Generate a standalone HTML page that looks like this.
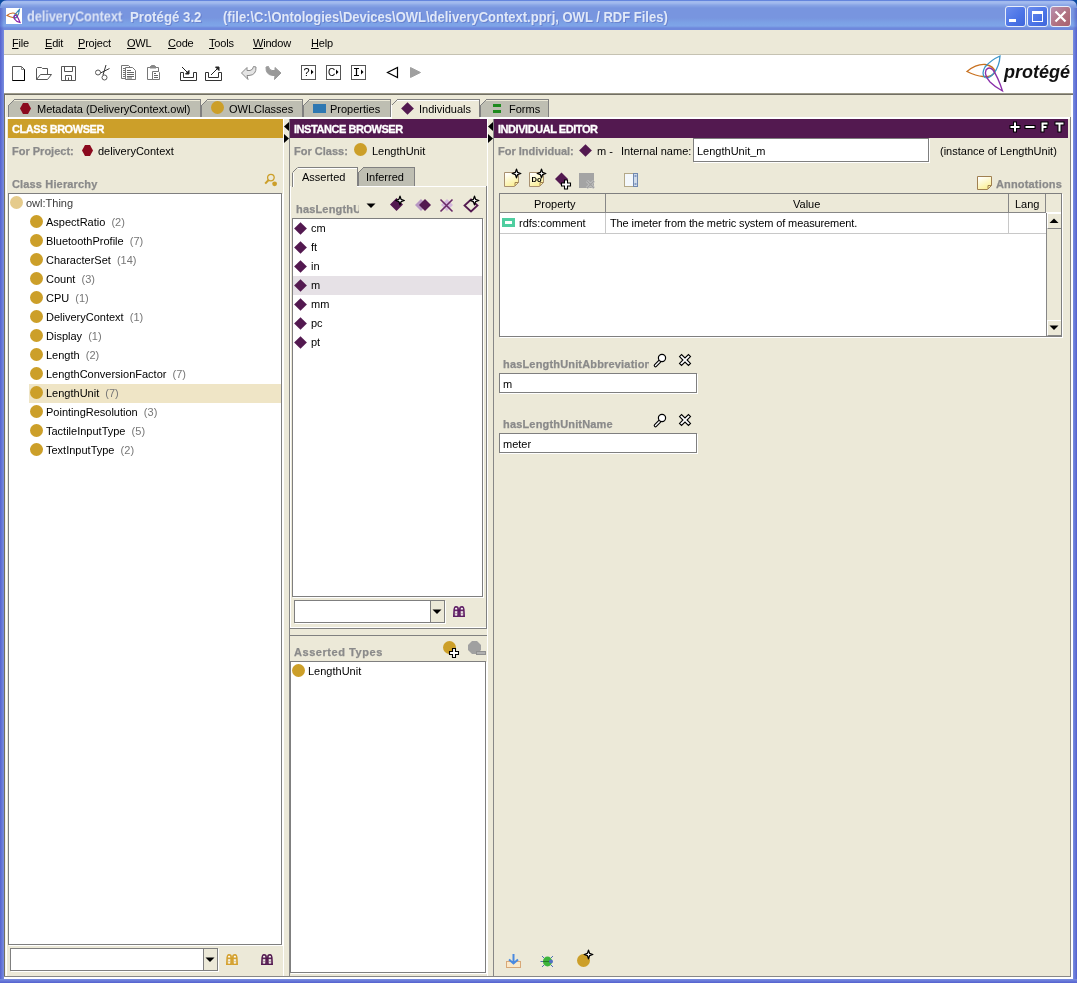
<!DOCTYPE html>
<html><head><meta charset="utf-8">
<style>
*{margin:0;padding:0;box-sizing:border-box}
html,body{width:1077px;height:983px;overflow:hidden;background:#ECE9D8;font-family:"Liberation Sans",sans-serif;font-size:11px;color:#000}
.a{position:absolute}
.t{position:absolute;white-space:nowrap;line-height:13px;will-change:transform}
.b{font-weight:bold}
.g{color:#8A8A8A;-webkit-text-stroke:0.25px #8A8A8A}
.c{color:#777}
.hdr{position:absolute;color:#fff;font-weight:bold;font-size:11px;line-height:21px;padding-left:4px;height:19px;letter-spacing:-0.45px;will-change:transform;-webkit-text-stroke:0.3px #fff}
.box{position:absolute;background:#fff;border:1px solid #7F7F7F;box-shadow:1px 1px 0 #fff}
.cg{position:absolute;width:13px;height:13px;border-radius:50%;background:#CC9F29}
.dm{position:absolute;width:9px;height:9px;background:#531950;transform:rotate(45deg)}
.u{text-decoration:underline}
.hl{position:absolute;background:#7F7F7F}
.wl{position:absolute;background:#fff}
svg{position:absolute;overflow:visible;will-change:transform}
</style></head><body>
<!-- window frame -->
<div class="a" style="left:0;top:0;width:1077px;height:983px;background:#6F84DC"></div>
<div class="a" style="left:0;top:0;width:8px;height:8px;background:#0B4AA0"></div><div class="a" style="left:1069px;top:0;width:8px;height:8px;background:#0B4AA0"></div>
<div class="a" style="left:0;top:0;width:1077px;height:30px;background:linear-gradient(#6485DD 0px,#6485DD 1px,#A2BAEE 1px,#A2BAEE 3px,#8AA6E6 5px,#7895DF 8px,#7895DF 18px,#7CA2E6 23px,#7EA4E8 26px,#6E88DC 28px,#6E88DC 30px);border-radius:7px 7px 0 0"></div>
<div class="a" style="left:0;top:8px;width:4px;height:22px;background:linear-gradient(90deg,rgba(60,70,190,0.5),rgba(0,0,0,0))"></div><div class="a" style="left:1073px;top:8px;width:4px;height:22px;background:linear-gradient(90deg,rgba(0,0,0,0),rgba(60,70,190,0.5))"></div>
<div class="a" style="left:0;top:30px;width:4px;height:953px;background:linear-gradient(90deg,#5461CF,#7A8FE0)"></div>
<div class="a" style="left:1073px;top:30px;width:4px;height:953px;background:linear-gradient(90deg,#7A8FE0,#5461CF)"></div>
<div class="a" style="left:0;top:979px;width:1077px;height:4px;background:linear-gradient(#7A8FE0,#5461CF)"></div>
<div class="a" style="left:4px;top:30px;width:1069px;height:949px;background:#ECE9D8"></div>

<!-- title -->
<div class="a" style="left:6px;top:8px;width:16px;height:16px;background:#fff"></div>
<svg style="left:6px;top:8px" width="16" height="16" viewBox="0 0 16 16">
<path d="M1 7.5 Q5 4 9.5 5.5 Q12 7 11.5 8.5 Q10 10.5 7 9.5 Q4 9 1 7.5Z" fill="none" stroke="#C8671E" stroke-width="1.1"/>
<path d="M13.5 1.5 Q13 6 11 9 Q9.5 10.5 8.5 9.5 Q7.5 8 9.5 6 Q11 4 13.5 1.5Z" fill="none" stroke="#3A88B8" stroke-width="1.1"/>
<path d="M14 14.5 Q10 13.5 8.5 11 Q7 8.5 9 7.5 Q11 7 11.8 9.5 Q13 12 14 14.5Z" fill="none" stroke="#8A20A8" stroke-width="1.2"/>
</svg>
<div class="t b" style="left:27px;top:10px;font-size:13px;line-height:16px;color:#E0E8F8;text-shadow:1px 1px 0 #6A84D0;transform:scale(0.975,1.1);transform-origin:0 100%">deliveryContext</div>
<div class="t b" style="left:130px;top:10px;font-size:13px;line-height:16px;color:#E0E8F8;text-shadow:1px 1px 0 #6A84D0;transform:scale(1.02,1.1);transform-origin:0 100%">Protégé 3.2</div>
<div class="t b" style="left:223px;top:10px;font-size:13px;line-height:16px;color:#E0E8F8;text-shadow:1px 1px 0 #6A84D0;transform:scale(1.0,1.1);transform-origin:0 100%">(file:\C:\Ontologies\Devices\OWL\deliveryContext.pprj, OWL / RDF Files)</div>
<!-- title buttons -->
<div class="a" style="left:1005px;top:6px;width:21px;height:21px;border:1px solid #E8EEFA;border-radius:3px;background:linear-gradient(135deg,#6A8CEE,#4A73E6 60%,#3F66DA)"></div>
<div class="a" style="left:1009px;top:19px;width:7px;height:3px;background:#fff"></div>
<div class="a" style="left:1027px;top:6px;width:21px;height:21px;border:1px solid #E8EEFA;border-radius:3px;background:linear-gradient(135deg,#6A8CEE,#4A73E6 60%,#3F66DA)"></div>
<div class="a" style="left:1032px;top:11px;width:11px;height:11px;border:1px solid #fff;border-top-width:3px;border-left-width:1.5px;border-right-width:1.5px"></div>
<div class="a" style="left:1050px;top:6px;width:21px;height:21px;border:1px solid #E8EEFA;border-radius:3px;background:linear-gradient(135deg,#B890B0,#B0707E 60%,#A86070)"></div>
<svg style="left:1050px;top:6px" width="21" height="21"><path d="M5.5 5.5 L15.5 15.5 M15.5 5.5 L5.5 15.5" stroke="#fff" stroke-width="2.2"/></svg>

<!-- menubar -->
<div class="a" style="left:4px;top:54px;width:1069px;height:1px;background:#C5C2B2"></div>
<div class="t" style="left:12px;top:37px;letter-spacing:-0.2px"><span class="u">F</span>ile</div>
<div class="t" style="left:45px;top:37px;letter-spacing:-0.2px"><span class="u">E</span>dit</div>
<div class="t" style="left:78px;top:37px;letter-spacing:-0.2px"><span class="u">P</span>roject</div>
<div class="t" style="left:127px;top:37px;letter-spacing:-0.2px"><span class="u">O</span>WL</div>
<div class="t" style="left:168px;top:37px;letter-spacing:-0.2px"><span class="u">C</span>ode</div>
<div class="t" style="left:209px;top:37px;letter-spacing:-0.2px"><span class="u">T</span>ools</div>
<div class="t" style="left:253px;top:37px;letter-spacing:-0.2px"><span class="u">W</span>indow</div>
<div class="t" style="left:311px;top:37px;letter-spacing:-0.2px"><span class="u">H</span>elp</div>

<!-- toolbar -->
<div class="a" style="left:4px;top:55px;width:1069px;height:38px;background:#fff"></div>
<svg style="left:0;top:0" width="1077" height="95">
<g fill="none" stroke="#555" stroke-width="1">
<!-- new doc -->
<path d="M12.5 66.5 H21.5 L24.5 69.5 V80.5 H12.5 Z" fill="#fff"/>
<path d="M21.5 66.5 V69.5 H24.5" stroke="#888"/>
<path d="M24.5 69.5 V80.5 H12.5" stroke="#000"/>
<!-- folder -->
<path d="M36.5 79.5 V68.5 L37.5 67.5 H41.5 L42.5 68.5 H47.5 V74.5" stroke="#555"/>
<path d="M36.5 79.5 L40.5 74.5 H51.5 L47.5 79.5 Z" stroke="#555"/>
<!-- floppy -->
<path d="M61.5 66.5 H75.5 V80.5 H61.5 Z"/>
<path d="M64.5 66.5 V71.5 H72.5 V66.5"/>
<path d="M65.5 80.5 V75.5 H71.5 V80.5 M68.5 77.5 V80.5"/>
<!-- scissors -->
<circle cx="98" cy="72.5" r="2.5"/>
<circle cx="104.5" cy="77.5" r="2.5"/>
<path d="M100.5 73 L109.5 68.5 M103 75 L106 65" stroke="#333"/>
<!-- copy -->
<path d="M121.5 65.5 H128.5 L130.5 67.5 V78.5 H121.5 Z" fill="#fff" stroke="#777"/>
<path d="M123 68.5 H125 M123 70.5 H125 M123 72.5 H125 M123 74.5 H125 M123 76.5 H125" stroke="#777"/>
<path d="M125.5 67.5 H132.5 L135.5 70.5 V79.5 H125.5 Z" fill="#fff" stroke="#777"/>
<path d="M127 70.5 H131 M127 72.5 H134 M127 74.5 H134 M127 76.5 H134 M127 78 H132" stroke="#666"/>
<!-- paste -->
<path d="M147.5 67.5 H158.5 V79.5 H147.5 Z" fill="#fff" stroke="#777"/>
<path d="M150 67 L151.5 65.5 H154.5 L156 67 V68 H150 Z" fill="#888" stroke="#888"/>
<path d="M152.5 71.5 H158.5 L159.5 72.5 V79.5 H152.5 Z" fill="#fff" stroke="#777"/>
<path d="M154 73.5 H156 M154 75.5 H158 M154 77.5 H158" stroke="#666"/>
<!-- import -->
<path d="M180.5 72.5 H183.5 V77.5 H193.5 V72.5 H196.5 V80.5 H180.5 Z" stroke="#333"/>
<path d="M182 67 L188.5 73.5" stroke="#222"/>
<path d="M189 74 L189 70.5 L185.5 74 Z" fill="#222" stroke="#222"/>
<!-- export -->
<path d="M205.5 72.5 H208.5 V77.5 H218.5 V72.5 H221.5 V80.5 H205.5 Z" stroke="#333"/>
<path d="M211 75 L218 68" stroke="#222"/>
<path d="M219 67 L219 70.5 L215.5 67 Z" fill="#222" stroke="#222"/>
<!-- undo -->
<path d="M241.5 73 L247 67.5 V70.5 H250 Q253 70 253.5 66.5 L256 67 Q256.5 75 249 75.5 H247 L248 79.5 Z" fill="#E4E4E4" stroke="#888"/>
<!-- redo -->
<path d="M281 73 L275 67.5 V70.5 H272 Q269 70 268.5 66.5 L266 67 Q265.5 75 273 75.5 H275 L274.5 79.5 Z" fill="#9A9A9A" stroke="#9A9A9A"/>
<!-- boxes -->
<rect x="301.5" y="65.5" width="14" height="14" stroke="#555"/>
<rect x="326.5" y="65.5" width="14" height="14" stroke="#555"/>
<rect x="351.5" y="65.5" width="14" height="14" stroke="#555"/>
<!-- nav -->
<path d="M397.5 67.5 V77.5 L387.5 72.5 Z" stroke="#000" stroke-width="1.2"/>
<path d="M410.5 67.5 V77.5 L420.5 72.5 Z" fill="#A0A0A0" stroke="#A0A0A0"/>
</g>
<g fill="#000">
<polygon points="311,69.5 313.5,72 311,74.5"/>
<polygon points="336,69.5 338.5,72 336,74.5"/>
<polygon points="361,69.5 363.5,72 361,74.5"/>
</g>
<text x="303.5" y="76" font-family="Liberation Sans" font-size="11" fill="#000">?</text>
<text x="328" y="76" font-family="Liberation Sans" font-size="10" fill="#000">C</text>
<path d="M354 68.5 H359 M356.5 68.5 V75.5 M354 75.5 H359" stroke="#000" stroke-width="1.2" fill="none"/>
<!-- protege logo -->
<g fill="none" stroke-width="1.3">
<path d="M967 71.5 Q976 64 985 64.5 Q994 66 995 72 Q993 77 983 76.5 Q976 76 967 71.5 Z" stroke="#C8701E"/>
<path d="M1000 56 Q999.5 66 994 73 Q989 79 985 77.5 Q981 74 985 67 Q991 60 1000 56 Z" stroke="#3A94C8"/>
<path d="M1002.5 91 Q995 87 990 82 Q984 75 986 70 Q989 66 993 70 Q998 77 1002.5 91 Z" stroke="#8A2FAA"/>
</g>
<text x="1004" y="77.6" font-family="Liberation Sans" font-size="18" font-weight="bold" font-style="italic" fill="#111">protégé</text>
</svg>


<!-- tabbed pane border -->
<div class="a" style="left:4px;top:93px;width:1069px;height:1px;background:#9D9A8A"></div>
<div class="a" style="left:4px;top:94px;width:1069px;height:1px;background:#716F64"></div>
<div class="a" style="left:4px;top:94px;width:1px;height:883px;background:#716F64"></div>
<div class="a" style="left:5px;top:95px;width:1px;height:881px;background:#F6F4EA"></div>
<div class="a" style="left:1070px;top:117px;width:1px;height:860px;background:#878787"></div>
<div class="a" style="left:1071px;top:95px;width:2px;height:884px;background:#fff"></div>
<div class="a" style="left:4px;top:976px;width:1067px;height:1px;background:#878787"></div>
<div class="a" style="left:4px;top:977px;width:1069px;height:2px;background:#fff"></div>
<svg style="left:0;top:0" width="1077" height="140" shape-rendering="crispEdges">
<g fill="#BEBEB2" stroke="none">
<polygon points="8,105 14,99 201,99 201,117 8,117"/>
<polygon points="201,105 207,99 303,99 303,117 201,117"/>
<polygon points="303,105 309,99 391,99 391,117 303,117"/>
<polygon points="480,105 486,99 549,99 549,117 480,117"/>
</g>
<polygon points="391,105 397,99 480,99 480,119 391,119" fill="#ECE9D8"/>
<g fill="#ECE9D8"><rect x="13" y="100" width="187" height="1"/><rect x="206" y="100" width="96" height="1"/><rect x="308" y="100" width="82" height="1"/><rect x="485" y="100" width="63" height="1"/></g>
<g fill="#808080">
<rect x="14" y="99" width="187" height="1"/><rect x="8" y="105" width="1" height="12"/><rect x="200" y="99" width="1" height="18"/>
<rect x="207" y="99" width="96" height="1"/><rect x="201" y="105" width="1" height="12"/><rect x="302" y="99" width="1" height="18"/>
<rect x="309" y="99" width="82" height="1"/><rect x="303" y="105" width="1" height="12"/><rect x="390" y="99" width="1" height="18"/>
<rect x="397" y="99" width="83" height="1"/><rect x="479" y="99" width="1" height="18"/>
<rect x="486" y="99" width="63" height="1"/><rect x="480" y="105" width="1" height="12"/><rect x="548" y="99" width="1" height="18"/>
</g>
<g stroke="#808080" stroke-width="1" shape-rendering="auto">
<path d="M8.5 105.5 L14.5 99.5 M201.5 105.5 L207.5 99.5 M303.5 105.5 L309.5 99.5 M391.5 105.5 L397.5 99.5 M480.5 105.5 L486.5 99.5"/>
</g>
<rect x="397" y="100" width="82" height="1" fill="#fff"/>
<rect x="391" y="105" width="1" height="14" fill="#fff"/>
<rect x="6" y="117" width="385" height="2" fill="#fff"/>
<rect x="480" y="117" width="590" height="2" fill="#fff"/>
<rect x="6" y="117" width="1" height="859" fill="#fff"/>
</svg>
<svg style="left:20px;top:103px" width="11" height="11" viewBox="0 0 11 11"><polygon points="3,0 8,0 11,5.5 8,11 3,11 0,5.5" fill="#8B0A1E"/></svg>
<div class="t" style="left:37px;top:103px">Metadata (DeliveryContext.owl)</div>
<div class="cg" style="left:211px;top:101px"></div>
<div class="t" style="left:229px;top:103px">OWLClasses</div>
<div class="a" style="left:313px;top:104px;width:13px;height:9px;background:#2E78B2"></div>
<div class="t" style="left:330px;top:103px">Properties</div>
<div class="dm" style="left:403px;top:104px"></div>
<div class="t" style="left:418.5px;top:103px">Individuals</div>
<div class="a" style="left:493px;top:104px;width:8px;height:3px;background:#1E8A1E"></div>
<div class="a" style="left:493px;top:110px;width:8px;height:3px;background:#1E8A1E"></div>
<div class="t" style="left:509px;top:103px">Forms</div>


<!-- splitter 1 -->
<div class="a" style="left:283px;top:119px;width:1px;height:857px;background:#fff"></div>
<div class="a" style="left:289px;top:119px;width:1px;height:857px;background:#878787"></div>
<svg style="left:284px;top:122px" width="6" height="22"><polygon points="5,0 5,9 0,4.5" fill="#000"/><polygon points="0,12 0,21 5,16.5" fill="#000"/></svg>
<!-- splitter 2 -->
<div class="a" style="left:487px;top:119px;width:1px;height:857px;background:#fff"></div>
<div class="a" style="left:493px;top:119px;width:1px;height:857px;background:#878787"></div>
<svg style="left:488px;top:122px" width="6" height="22"><polygon points="5,0 5,9 0,4.5" fill="#000"/><polygon points="0,12 0,21 5,16.5" fill="#000"/></svg>

<!-- CLASS BROWSER -->
<div class="hdr" style="left:8px;top:119px;width:275px;background:#CC9F29">CLASS BROWSER</div>
<div class="t b g" style="left:12px;top:145px">For Project:</div>
<svg style="left:82px;top:145px" width="11" height="11" viewBox="0 0 11 11"><polygon points="3,0 8,0 11,5.5 8,11 3,11 0,5.5" fill="#8B0A1E"/></svg>
<div class="t" style="left:98px;top:145px">deliveryContext</div>
<div class="t b g" style="left:12px;top:178px;letter-spacing:0.15px">Class Hierarchy</div>
<svg style="left:264px;top:174px" width="14" height="13"><circle cx="6.9" cy="3.6" r="3.3" fill="none" stroke="#CC9F29" stroke-width="1.3"/><path d="M4.6 6 L1.2 9.6" stroke="#CC9F29" stroke-width="2"/><circle cx="10.6" cy="9.8" r="2.4" fill="#CC9F29"/></svg>
<div class="box" style="left:8px;top:193px;width:274px;height:752px"></div>
<div class="a" style="left:29px;top:384px;width:252px;height:19px;background:#EFE5C6"></div>
<div class="cg" style="left:10px;top:196px;background:#E5CB8C"></div>
<div class="t c" style="left:26px;top:197px;color:#3A3A3A">owl:Thing</div>
<div class="cg" style="left:30px;top:215px"></div><div class="t" style="left:46px;top:216px">AspectRatio <span class="c">&nbsp;(2)</span></div>
<div class="cg" style="left:30px;top:234px"></div><div class="t" style="left:46px;top:235px">BluetoothProfile <span class="c">&nbsp;(7)</span></div>
<div class="cg" style="left:30px;top:253px"></div><div class="t" style="left:46px;top:254px">CharacterSet <span class="c">&nbsp;(14)</span></div>
<div class="cg" style="left:30px;top:272px"></div><div class="t" style="left:46px;top:273px">Count <span class="c">&nbsp;(3)</span></div>
<div class="cg" style="left:30px;top:291px"></div><div class="t" style="left:46px;top:292px">CPU <span class="c">&nbsp;(1)</span></div>
<div class="cg" style="left:30px;top:310px"></div><div class="t" style="left:46px;top:311px">DeliveryContext <span class="c">&nbsp;(1)</span></div>
<div class="cg" style="left:30px;top:329px"></div><div class="t" style="left:46px;top:330px">Display <span class="c">&nbsp;(1)</span></div>
<div class="cg" style="left:30px;top:348px"></div><div class="t" style="left:46px;top:349px">Length <span class="c">&nbsp;(2)</span></div>
<div class="cg" style="left:30px;top:367px"></div><div class="t" style="left:46px;top:368px">LengthConversionFactor <span class="c">&nbsp;(7)</span></div>
<div class="cg" style="left:30px;top:386px"></div><div class="t" style="left:46px;top:387px">LengthUnit <span class="c">&nbsp;(7)</span></div>
<div class="cg" style="left:30px;top:405px"></div><div class="t" style="left:46px;top:406px">PointingResolution <span class="c">&nbsp;(3)</span></div>
<div class="cg" style="left:30px;top:424px"></div><div class="t" style="left:46px;top:425px">TactileInputType <span class="c">&nbsp;(5)</span></div>
<div class="cg" style="left:30px;top:443px"></div><div class="t" style="left:46px;top:444px">TextInputType <span class="c">&nbsp;(2)</span></div>
<!-- class combo -->
<div class="box" style="left:10px;top:948px;width:208px;height:23px"></div>
<div class="a" style="left:203px;top:949px;width:1px;height:21px;background:#7F7F7F"></div>
<div class="a" style="left:204px;top:949px;width:13px;height:21px;background:#ECE9D8"></div>
<svg style="left:205px;top:957px" width="10" height="6"><polygon points="0.5,0.5 9.5,0.5 5,5" fill="#000"/></svg>
<!--BINO1-->

<!-- INSTANCE BROWSER -->
<div class="hdr" style="left:290px;top:119px;width:197px;background:#531950">INSTANCE BROWSER</div>
<div class="t b g" style="left:294px;top:145px">For Class:</div>
<div class="cg" style="left:354px;top:143px"></div>
<div class="t" style="left:372px;top:145px">LengthUnit</div>
<!-- inner tabs -->
<svg style="left:0;top:0" width="500" height="640" shape-rendering="crispEdges">
<polygon points="358,172 363,167 415,167 415,186 358,186" fill="#BEBEB2"/>
<g fill="#808080">
<rect x="298" y="167" width="60" height="1"/><rect x="357" y="167" width="1" height="19"/>
<rect x="363" y="167" width="52" height="1"/><rect x="414" y="167" width="1" height="19"/><rect x="358" y="172" width="1" height="14"/>
<rect x="292" y="173" width="1" height="14"/>
<rect x="290" y="628" width="197" height="1"/>
<rect x="486" y="186" width="1" height="443"/>
<rect x="290" y="635" width="197" height="1"/>
</g>
<path d="M292.5 172.5 L297.5 167.5 M358.5 172.5 L363.5 167.5" stroke="#808080" shape-rendering="auto"/>
<rect x="298" y="168" width="59" height="1" fill="#fff"/>
<rect x="293" y="173" width="1" height="14" fill="#fff"/>
<rect x="290" y="186" width="1" height="442" fill="#fff"/>
<rect x="357" y="186" width="129" height="1" fill="#fff"/>
<rect x="290" y="627" width="196" height="1" fill="#fff"/>

</svg>
<div class="t" style="left:302px;top:171px">Asserted</div>
<div class="t" style="left:366px;top:171px">Inferred</div>
<div class="t b g" style="left:296px;top:203px;width:63px;overflow:hidden;letter-spacing:0.17px">hasLengthUnitAbbreviation</div>
<svg style="left:366px;top:203px" width="10" height="6"><polygon points="0.5,0.5 9.5,0.5 5,5" fill="#000"/></svg>
<!--IBICONS-->
<div class="box" style="left:292px;top:218px;width:191px;height:379px"></div>
<div class="a" style="left:293px;top:276px;width:189px;height:19px;background:#E6E1E6"></div>
<div class="dm" style="left:296px;top:224px"></div><div class="t" style="left:311px;top:222px">cm</div>
<div class="dm" style="left:296px;top:243px"></div><div class="t" style="left:311px;top:241px">ft</div>
<div class="dm" style="left:296px;top:262px"></div><div class="t" style="left:311px;top:260px">in</div>
<div class="dm" style="left:296px;top:281px"></div><div class="t" style="left:311px;top:279px">m</div>
<div class="dm" style="left:296px;top:300px"></div><div class="t" style="left:311px;top:298px">mm</div>
<div class="dm" style="left:296px;top:319px"></div><div class="t" style="left:311px;top:317px">pc</div>
<div class="dm" style="left:296px;top:338px"></div><div class="t" style="left:311px;top:336px">pt</div>
<div class="box" style="left:294px;top:600px;width:151px;height:23px"></div>
<div class="a" style="left:430px;top:601px;width:1px;height:21px;background:#7F7F7F"></div>
<div class="a" style="left:431px;top:601px;width:13px;height:21px;background:#ECE9D8"></div>
<svg style="left:432px;top:609px" width="10" height="6"><polygon points="0.5,0.5 9.5,0.5 5,5" fill="#000"/></svg>
<!--BINO2-->
<div class="t b g" style="left:294px;top:646px;letter-spacing:0.55px">Asserted Types</div>
<!--ATICONS-->
<div class="box" style="left:290px;top:661px;width:196px;height:312px"></div>
<div class="cg" style="left:292px;top:664px"></div>
<div class="t" style="left:308px;top:665px">LengthUnit</div>

<!-- INDIVIDUAL EDITOR -->
<div class="hdr" style="left:494px;top:119px;width:574px;background:#531950">INDIVIDUAL EDITOR</div>
<!--HDRICONS-->
<div class="t b g" style="left:498px;top:145px">For Individual:</div>
<div class="dm" style="left:581px;top:146px"></div>
<div class="t" style="left:597px;top:145px">m -</div>
<div class="t" style="left:621px;top:145px">Internal name:</div>
<div class="box" style="left:693px;top:138px;width:236px;height:24px"></div>
<div class="t" style="left:697px;top:145px">LengthUnit_m</div>
<div class="t" style="left:940px;top:145px">(instance of LengthUnit)</div>
<!--IEICONS-->
<div class="t b g" style="left:996px;top:178px;letter-spacing:0.16px">Annotations</div>
<!-- table -->
<div class="box" style="left:499px;top:193px;width:563px;height:144px"></div>
<div class="a" style="left:500px;top:194px;width:546px;height:18px;background:#ECE9D8"></div>
<div class="a" style="left:500px;top:212px;width:546px;height:1px;background:#878787"></div>
<div class="a" style="left:605px;top:194px;width:1px;height:18px;background:#878787"></div>
<div class="a" style="left:1008px;top:194px;width:1px;height:18px;background:#878787"></div>
<div class="a" style="left:1045px;top:194px;width:1px;height:18px;background:#878787"></div>
<div class="a" style="left:1046px;top:194px;width:15px;height:18px;background:#ECE9D8"></div>
<div class="a" style="left:500px;top:233px;width:546px;height:1px;background:#C8C8C8"></div>
<div class="a" style="left:605px;top:213px;width:1px;height:20px;background:#C8C8C8"></div>
<div class="a" style="left:1008px;top:213px;width:1px;height:20px;background:#C8C8C8"></div>
<div class="t" style="left:534px;top:198px">Property</div>
<div class="t" style="left:793px;top:198px">Value</div>
<div class="t" style="left:1015px;top:198px">Lang</div>
<div class="a" style="left:502px;top:218px;width:13px;height:9px;background:#4FCEA0"></div>
<div class="a" style="left:505px;top:221px;width:7px;height:3px;background:#fff"></div>
<div class="t" style="left:519px;top:217px">rdfs:comment</div>
<div class="t" style="left:610px;top:217px;letter-spacing:-0.11px">The imeter from the metric system of measurement.</div>
<!-- scrollbar -->
<div class="a" style="left:1046px;top:213px;width:15px;height:123px;background:#ECE9D8;border-left:1px solid #878787"></div>
<div class="a" style="left:1047px;top:213px;width:14px;height:16px;background:#ECE9D8;border-top:1px solid #fff;border-left:1px solid #fff;border-bottom:1px solid #878787"></div>
<svg style="left:1049px;top:218px" width="10" height="6"><polygon points="5,0.5 9.5,5 0.5,5" fill="#000"/></svg>
<div class="a" style="left:1047px;top:320px;width:14px;height:16px;background:#ECE9D8;border-top:1px solid #fff;border-left:1px solid #fff;border-bottom:1px solid #878787"></div>
<svg style="left:1049px;top:325px" width="10" height="6"><polygon points="0.5,0.5 9.5,0.5 5,5" fill="#000"/></svg>
<!-- properties -->
<div class="t b g" style="left:503px;top:358px;width:146px;overflow:hidden;letter-spacing:0.17px">hasLengthUnitAbbreviation</div>
<!--PICONS1-->
<div class="box" style="left:499px;top:373px;width:198px;height:20px"></div>
<div class="t" style="left:503px;top:378px">m</div>
<div class="t b g" style="left:503px;top:418px;letter-spacing:0.17px">hasLengthUnitName</div>
<!--PICONS2-->
<div class="box" style="left:499px;top:433px;width:198px;height:20px"></div>
<div class="t" style="left:503px;top:438px">meter</div>
<!--BOTICONS-->

<!--ICONS-->
<svg style="left:0;top:0" width="1077" height="983">
<polygon points="396.5,198 403,204.5 396.5,211 390,204.5" fill="#531950"/>
<path d="M400 196.2 L401.1 199.4 L404.3 200.5 L401.1 201.6 L400 204.8 L398.9 201.6 L395.7 200.5 L398.9 199.4 Z" fill="#fff" stroke="#000" stroke-width="1.3" stroke-linejoin="round"/>
<polygon points="421.0,199 427,205.0 421.0,211 415,205.0" fill="#B898C4"/>
<polygon points="425.0,199 431,205.0 425.0,211 419,205.0" fill="#531950"/>
<polygon points="447.0,199 453,205.0 447.0,211 441,205.0" fill="#D4B8DC"/>
<path d="M440.5 199.5 L452.5 211.5 M452.5 199.5 L440.5 211.5" stroke="#6A2A68" stroke-width="1.6"/>
<polygon points="471,199.5 477.5,205.5 471,211.5 464.5,205.5" fill="none" stroke="#531950" stroke-width="1.8"/>
<path d="M474.5 196.2 L475.6 199.4 L478.8 200.5 L475.6 201.6 L474.5 204.8 L473.4 201.6 L470.2 200.5 L473.4 199.4 Z" fill="#fff" stroke="#000" stroke-width="1.3" stroke-linejoin="round"/>
<g fill="#5C1A63" fill-opacity="0.35" stroke="#5C1A63" stroke-width="1.5"><path d="M456 606.8 Q458.2 606.8 458.2 609 V616.2 H453.8 L454 612 Q454 606.8 456 606.8 Z"/><path d="M462 606.8 Q464 606.8 464 612 L464.2 616.2 H459.8 V609 Q459.8 606.8 462 606.8 Z"/></g><g fill="#5C1A63"><rect x="458" y="609.8" width="2" height="2.5"/><rect x="454" y="609.6" width="4.5" height="1.3"/><rect x="459.5" y="609.6" width="4.5" height="1.3"/></g><g fill="#fff"><rect x="455.3" y="608.0" width="1.6" height="1.3"/><rect x="461.1" y="608.0" width="1.6" height="1.3"/><rect x="455.3" y="611.5" width="1.6" height="1.3"/><rect x="461.1" y="611.5" width="1.6" height="1.3"/><rect x="455.3" y="614.2" width="1.6" height="1.3"/><rect x="461.1" y="614.2" width="1.6" height="1.3"/></g>
<g fill="#D4A02C" fill-opacity="0.35" stroke="#D4A02C" stroke-width="1.5"><path d="M229 954.8 Q231.2 954.8 231.2 957 V964.2 H226.8 L227 960 Q227 954.8 229 954.8 Z"/><path d="M235 954.8 Q237 954.8 237 960 L237.2 964.2 H232.8 V957 Q232.8 954.8 235 954.8 Z"/></g><g fill="#D4A02C"><rect x="231" y="957.8" width="2" height="2.5"/><rect x="227" y="957.6" width="4.5" height="1.3"/><rect x="232.5" y="957.6" width="4.5" height="1.3"/></g><g fill="#fff"><rect x="228.3" y="956.0" width="1.6" height="1.3"/><rect x="234.1" y="956.0" width="1.6" height="1.3"/><rect x="228.3" y="959.5" width="1.6" height="1.3"/><rect x="234.1" y="959.5" width="1.6" height="1.3"/><rect x="228.3" y="962.2" width="1.6" height="1.3"/><rect x="234.1" y="962.2" width="1.6" height="1.3"/></g>
<g fill="#531950" fill-opacity="0.35" stroke="#531950" stroke-width="1.5"><path d="M264 954.8 Q266.2 954.8 266.2 957 V964.2 H261.8 L262 960 Q262 954.8 264 954.8 Z"/><path d="M270 954.8 Q272 954.8 272 960 L272.2 964.2 H267.8 V957 Q267.8 954.8 270 954.8 Z"/></g><g fill="#531950"><rect x="266" y="957.8" width="2" height="2.5"/><rect x="262" y="957.6" width="4.5" height="1.3"/><rect x="267.5" y="957.6" width="4.5" height="1.3"/></g><g fill="#fff"><rect x="263.3" y="956.0" width="1.6" height="1.3"/><rect x="269.1" y="956.0" width="1.6" height="1.3"/><rect x="263.3" y="959.5" width="1.6" height="1.3"/><rect x="269.1" y="959.5" width="1.6" height="1.3"/><rect x="263.3" y="962.2" width="1.6" height="1.3"/><rect x="269.1" y="962.2" width="1.6" height="1.3"/></g>
<circle cx="449.5" cy="647.5" r="6.5" fill="#CC9F29"/>
<path d="M452.5 648.5 H455.5 V651.5 H458.5 V654.5 H455.5 V657.5 H452.5 V654.5 H449.5 V651.5 H452.5 Z" fill="#fff" stroke="#000" stroke-width="1.1"/>
<polygon points="472,641 477,641 481,645 481,650 477,654 472,654 468,650 468,645" fill="#A0A0A0"/>
<rect x="476.5" y="651.5" width="9" height="3" fill="#B0B0B0" stroke="#909090"/>
<defs><linearGradient id="ng504" x1="0" y1="0" x2="0.5" y2="1"><stop offset="0.1" stop-color="#FFFFFF"/><stop offset="1" stop-color="#FBF098"/></linearGradient></defs><path d="M504.5 172.5 H518.5 V182.5 L514.5 186.5 H504.5 Z" fill="url(#ng504)" stroke="#A89070"/><path d="M518.5 182.5 H515 V186" fill="none" stroke="#A08050"/>
<path d="M516.5 169.2 L517.6 172.4 L520.8 173.5 L517.6 174.6 L516.5 177.8 L515.4 174.6 L512.2 173.5 L515.4 172.4 Z" fill="#fff" stroke="#000" stroke-width="1.3" stroke-linejoin="round"/>
<defs><linearGradient id="ng529" x1="0" y1="0" x2="0.5" y2="1"><stop offset="0.1" stop-color="#FFFFFF"/><stop offset="1" stop-color="#FBF098"/></linearGradient></defs><path d="M529.5 172.5 H543.5 V182.5 L539.5 186.5 H529.5 Z" fill="url(#ng529)" stroke="#A89070"/><path d="M543.5 182.5 H540 V186" fill="none" stroke="#A08050"/><text x="531.5" y="181.5" font-family="Liberation Sans" font-weight="bold" font-size="7.5" fill="#000">Do</text>
<path d="M541.5 169.2 L542.6 172.4 L545.8 173.5 L542.6 174.6 L541.5 177.8 L540.4 174.6 L537.2 173.5 L540.4 172.4 Z" fill="#fff" stroke="#000" stroke-width="1.3" stroke-linejoin="round"/>
<polygon points="561.5,172.5 568,179.0 561.5,185.5 555,179.0" fill="#531950"/>
<path d="M564.5 180.0 H567.5 V183.0 H570.5 V186.0 H567.5 V189.0 H564.5 V186.0 H561.5 V183.0 H564.5 Z" fill="#fff" stroke="#000" stroke-width="1.1"/>
<rect x="579" y="173" width="15" height="15" fill="#A4A4A4"/>
<path d="M587 181 L594 188 M594 181 L587 188" stroke="#C8C8C8" stroke-width="2.6"/><path d="M587 181 L594 188 M594 181 L587 188" stroke="#A0A0A0" stroke-width="1.4"/>
<rect x="624.5" y="173.5" width="13" height="13" fill="#F4F8FC" stroke="#B4A888"/>
<rect x="633.5" y="173.5" width="4" height="13" fill="#D0DCEC" stroke="#7088B0"/>
<rect x="634.5" y="175.5" width="2" height="1" fill="#4060A0"/><rect x="634.5" y="183.5" width="2" height="1" fill="#4060A0"/>
<path d="M977.5 176.5 H991.5 V185.5 L987.5 189.5 H977.5 Z" fill="url(#ng977)" stroke="#A08050"/>
<defs><linearGradient id="ng977" x1="0" y1="0" x2="0.5" y2="1"><stop offset="0.1" stop-color="#FFFFFF"/><stop offset="1" stop-color="#FBF098"/></linearGradient></defs>
<path d="M991.5 185.5 H988 V189" fill="none" stroke="#A08050"/>
<path d="M659.5 361.5 L655.5 365.5" stroke="#000" stroke-width="3.6" stroke-linecap="round"/>
<path d="M659.5 361.5 L655.5 365.5" stroke="#fff" stroke-width="1.4" stroke-linecap="round"/>
<circle cx="662" cy="358" r="3.6" fill="#fff" stroke="#000" stroke-width="1.2"/>
<polygon points="679.50,356.55 681.55,354.50 685.00,357.95 688.45,354.50 690.50,356.55 687.05,360.00 690.50,363.45 688.45,365.50 685.00,362.05 681.55,365.50 679.50,363.45 682.95,360.00" fill="#fff" stroke="#000" stroke-width="1.1" stroke-linejoin="miter"/>
<path d="M659.5 421.5 L655.5 425.5" stroke="#000" stroke-width="3.6" stroke-linecap="round"/>
<path d="M659.5 421.5 L655.5 425.5" stroke="#fff" stroke-width="1.4" stroke-linecap="round"/>
<circle cx="662" cy="418" r="3.6" fill="#fff" stroke="#000" stroke-width="1.2"/>
<polygon points="679.50,416.55 681.55,414.50 685.00,417.95 688.45,414.50 690.50,416.55 687.05,420.00 690.50,423.45 688.45,425.50 685.00,422.05 681.55,425.50 679.50,423.45 682.95,420.00" fill="#fff" stroke="#000" stroke-width="1.1" stroke-linejoin="miter"/>
<rect x="506.5" y="961.5" width="14" height="6" fill="#FBE8C8" stroke="#D8A878"/>
<path d="M513.5 954 V963 M509 959.5 L513.5 963.5 L518 959.5" fill="none" stroke="#4A8AE0" stroke-width="2"/>
<ellipse cx="547.5" cy="961.5" rx="4.5" ry="5" fill="#3CB43C"/><path d="M543 961.5 H552" stroke="#1E6E1E" stroke-width="0.8"/>
<circle cx="551" cy="961.5" r="2" fill="#5070C0"/>
<path d="M542 956 L544 958 M553 956 L551 958 M542 967 L544 965 M553 967 L551 965 M540.5 961.5 H543" stroke="#4060B0" stroke-width="0.9"/>
<circle cx="583.5" cy="960.5" r="6.5" fill="#CC9F29"/>
<path d="M588.5 950.2 L589.6 953.4 L592.8 954.5 L589.6 955.6 L588.5 958.8 L587.4 955.6 L584.2 954.5 L587.4 953.4 Z" fill="#fff" stroke="#000" stroke-width="1.3" stroke-linejoin="round"/>
<g stroke="#000" stroke-width="4" fill="none" stroke-linecap="square">
<path d="M1015 123.5 V130.5 M1011.5 127 H1018.5"/><path d="M1026.5 127 H1033.5"/>
<path d="M1042.5 130.5 V123.5 H1046.5 M1042.5 127 H1045.5"/><path d="M1056.5 123.5 H1062.5 M1059.5 123.5 V130.5"/>
</g><g stroke="#fff" stroke-width="2" fill="none" stroke-linecap="square">
<path d="M1015 123.5 V130.5 M1011.5 127 H1018.5"/><path d="M1026.5 127 H1033.5"/>
<path d="M1042.5 130.5 V123.5 H1046.5 M1042.5 127 H1045.5"/><path d="M1056.5 123.5 H1062.5 M1059.5 123.5 V130.5"/>
</g>
</svg>
<!--/ICONS-->
</body></html>
